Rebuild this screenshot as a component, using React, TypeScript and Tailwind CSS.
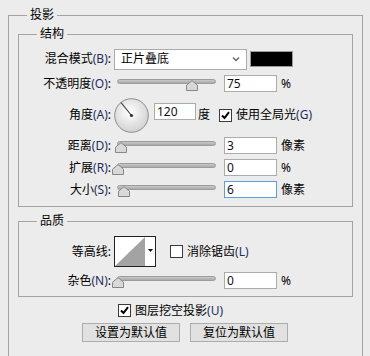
import type { ReactNode } from "react";

const font = "font-['Noto_Sans','Noto_Sans_CJK_SC',sans-serif]";

function Group({ title, className, children }: { title: string; className?: string; children: ReactNode }) {
  return (
    <div className={`border border-[#a3a3a3] ${className ?? ""}`}>
      <div className="-mt-[10px] ml-[18px] w-fit bg-[#ececec] px-[3px] leading-[18px]">{title}</div>
      {children}
    </div>
  );
}

function Key({ k }: { k: string }) {
  return <span className="text-[#1f2d5c]">({k})</span>;
}

function Label({ text, k }: { text: string; k?: string }) {
  return (
    <div className="w-[92px] shrink-0 text-right">
      {text}
      {k && <Key k={k} />}:
    </div>
  );
}

function Check({ on }: { on?: boolean }) {
  return (
    <span className="flex h-[13px] w-[13px] shrink-0 items-center justify-center border border-[#3a3a3a] bg-white">
      {on && (
        <svg width="9" height="9" viewBox="0 0 9 9">
          <path d="M1 4.5 L3.5 7 L8 1.2" stroke="#000" strokeWidth="2" fill="none" />
        </svg>
      )}
    </span>
  );
}

function Slider({ thumb }: { thumb: number }) {
  return (
    <div className="relative h-[19px] w-[107px] shrink-0 pl-[6px] pt-[5px]">
      <div className="h-[5px] w-[99px] rounded-full border border-[#9c9c9c] bg-gradient-to-b from-[#c9c9c9] to-[#a9a9a9]" />
      <svg className="absolute top-[6px]" style={{ left: thumb }} width="12" height="11" viewBox="0 0 12 11">
        <path d="M0.5 10.5 V5.2 L6 0.6 L11.5 5.2 V10.5 Z" fill="#d8d8d8" stroke="#868686" />
      </svg>
    </div>
  );
}

function Field({ value, focus, w = "w-[53px]" }: { value: string; focus?: boolean; w?: string }) {
  return (
    <div
      className={`${w} h-[17px] shrink-0 border bg-white pl-[2px] leading-[15px] text-[#111] ${
        focus ? "border-[#5b9de3]" : "border-[#ababab]"
      }`}
    >
      {value}
    </div>
  );
}

function SliderRow({ label, k, thumb, value, unit, focus }: { label: string; k: string; thumb: number; value: string; unit: string; focus?: boolean }) {
  return (
    <div className="mt-[3px] flex h-[19px] items-center">
      <Label text={label} k={k} />
      <Slider thumb={thumb} />
      <div className="ml-[6px]">
        <Field value={value} focus={focus} />
      </div>
      <span className="ml-[4px]">{unit}</span>
    </div>
  );
}

export default function App() {
  return (
    <div className={`${font} h-[356px] w-[370px] overflow-hidden bg-[#ececec] pl-[8px] pt-[15px] text-[12px] leading-[16px] text-black`}>
      <Group title="投影" className="h-[380px] w-[355px]">
        <div className="px-[9px]">
          {/* 结构 */}
          <Group title="结构" className="mt-[10px] pb-[7px]">
            <div className="mt-[5px] flex h-[22px] items-center">
              <Label text="混合模式" k="B" />
              <div className="ml-[3px] flex h-[21px] w-[133px] items-center justify-between border border-[#ababab] bg-white px-[6px]">
                <span>正片叠底</span>
                <svg width="8" height="6" viewBox="0 0 8 6">
                  <path d="M1 1.5 L4 4.5 L7 1.5" stroke="#666" strokeWidth="1.4" fill="none" />
                </svg>
              </div>
              <div className="ml-[3px] h-[16px] w-[43px] border border-[#9a9a9a] bg-black" />
            </div>

            <div className="mt-[4px] flex h-[19px] items-center">
              <Label text="不透明度" k="O" />
              <Slider thumb={75} />
              <div className="ml-[6px]">
                <Field value="75" />
              </div>
              <span className="ml-[4px]">%</span>
            </div>

            <div className="mt-[4px] flex h-[36px] items-center">
              <Label text="角度" k="A" />
              <svg className="ml-[3px] shrink-0" width="35" height="35" viewBox="0 0 35 35">
                <defs>
                  <radialGradient id="dial" cx="45%" cy="40%" r="60%">
                    <stop offset="0%" stopColor="#ffffff" />
                    <stop offset="100%" stopColor="#d2d2d2" />
                  </radialGradient>
                </defs>
                <circle cx="17.5" cy="17.5" r="16.8" fill="url(#dial)" stroke="#8d8d8d" />
                <line x1="17.5" y1="17.5" x2="7" y2="4.5" stroke="#333" strokeWidth="1.1" />
                <circle cx="17.5" cy="17.5" r="1.6" fill="#333" />
              </svg>
              <div className="mb-[8px] ml-[5px]">
                <Field value="120" w="w-[42px]" />
              </div>
              <span className="ml-[2px]">度</span>
              <span className="ml-[9px]">
                <Check on />
              </span>
              <span className="ml-[4px]">
                使用全局光
                <Key k="G" />
              </span>
            </div>

            <SliderRow label="距离" k="D" thumb={4} value="3" unit="像素" />
            <SliderRow label="扩展" k="R" thumb={1} value="0" unit="%" />
            <SliderRow label="大小" k="S" thumb={7} value="6" unit="像素" focus />
          </Group>

          {/* 品质 */}
          <Group title="品质" className="mt-[14px] pb-[6px]">
            <div className="mt-[6px] flex h-[31px] items-center">
              <Label text="等高线" />
              <svg className="ml-[3px] shrink-0" width="42" height="31" viewBox="0 0 42 31">
                <rect x="0.5" y="0.5" width="41" height="30" fill="#fff" stroke="#222" />
                <path d="M1 30 L31 1 L31 30 Z" fill="#a3a3a3" />
                <path d="M34 13 L39 13 L36.5 16 Z" fill="#111" />
              </svg>
              <span className="ml-[14px]">
                <Check />
              </span>
              <span className="ml-[4px]">
                消除锯齿
                <Key k="L" />
              </span>
            </div>

            <div className="mt-[4px] flex h-[19px] items-center">
              <Label text="杂色" k="N" />
              <Slider thumb={1} />
              <div className="ml-[6px]">
                <Field value="0" />
              </div>
              <span className="ml-[4px]">%</span>
            </div>
          </Group>

          <div className="ml-[100px] mt-[6px] flex h-[15px] items-center">
            <Check on />
            <span className="ml-[4px]">
              图层挖空投影
              <Key k="U" />
            </span>
          </div>

          <div className="ml-[64px] mt-[5px] flex gap-[10px]">
            <button className="h-[19px] w-[98px] border border-[#adadad] bg-[#e1e1e1] text-[12px] leading-[17px]">设置为默认值</button>
            <button className="h-[19px] w-[98px] border border-[#adadad] bg-[#e1e1e1] text-[12px] leading-[17px]">复位为默认值</button>
          </div>
        </div>
      </Group>
    </div>
  );
}
